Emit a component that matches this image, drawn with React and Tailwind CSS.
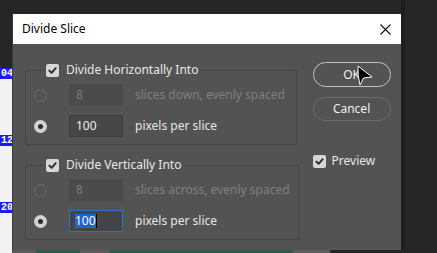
import React from "react";

const font = { fontFamily: '"Noto Sans", "Open Sans", sans-serif' };

const CheckBox = () => (
  <span className="flex h-[13px] w-[13px] shrink-0 items-center justify-center rounded-[2px] bg-[#d6d6d6]">
    <svg width="9" height="9" viewBox="0 0 9 9">
      <path d="M1.3 4.6 L3.6 6.8 L7.7 2.2" fill="none" stroke="#2a2a2a" strokeWidth="1.9" strokeLinecap="round" strokeLinejoin="round" />
    </svg>
  </span>
);

const Radio = ({ on }) =>
  on ? (
    <span className="flex h-[13px] w-[13px] shrink-0 items-center justify-center rounded-full bg-[#d2d2d2]">
      <span className="h-[5px] w-[5px] rounded-full bg-[#2c2c2c]" />
    </span>
  ) : (
    <span className="h-[13px] w-[13px] shrink-0 rounded-full border border-[#6a6a6a]" />
  );

const Row = ({ on, value, label, focused }) => (
  <div className="flex h-[22px] items-center whitespace-nowrap">
    <Radio on={on} />
    {focused ? (
      <div className="ml-[22px] flex h-[22px] w-[54px] shrink-0 items-center border border-[#2d6fc9] bg-[#454545] pl-[5px]">
        <span className="bg-[#1f63d4] text-[12px] leading-[14px] text-white">{value}</span>
        <span className="h-[14px] w-px bg-black" />
      </div>
    ) : on ? (
      <div className="ml-[22px] flex h-[22px] w-[54px] shrink-0 items-center border border-[#3c3c3c] bg-[#474747] pl-[6px] text-[12px] text-[#efefef]">
        {value}
      </div>
    ) : (
      <div className="ml-[22px] flex h-[22px] w-[54px] shrink-0 items-center border border-[#4c4c4c] bg-[#4b4b4b] pl-[6px] text-[12px] text-[#7c7c7c]">
        {value}
      </div>
    )}
    <span className={on ? "ml-[12px] text-[12px] text-[#e6e6e6]" : "ml-[12px] text-[12px] text-[#7f7f7f]"}>{label}</span>
  </div>
);

const Group = ({ title, rows, className }) => (
  <fieldset className={"w-[272px] rounded-[2px] border border-[#454545] px-[8px] pb-[7px] " + className}>
    <legend className="ml-[9px] flex items-center gap-[7px] px-[3px]">
      <CheckBox />
      <span className="whitespace-nowrap text-[12px] leading-[14px] text-[#e8e8e8]">{title}</span>
    </legend>
    <div className="mt-[7px] flex flex-col gap-[9px]">
      {rows.map((r, i) => (
        <Row key={i} {...r} />
      ))}
    </div>
  </fieldset>
);

const Label = ({ text }) => (
  <div className="flex h-[11px] w-[14px] items-center justify-end bg-[#1c1cf0] pr-[1px] font-mono text-[10px] font-bold leading-none text-white">
    {text}
  </div>
);

export default function App() {
  return (
    <div className="flex h-[253px] w-[437px] flex-col overflow-hidden bg-[#262626]" style={font}>
      <div className="flex h-[250px]">
        {/* canvas strip */}
        <div className="flex w-[12px] flex-col overflow-hidden">
          <div className="h-[68px] bg-[#262626]" />
          <div className="flex flex-1 flex-col bg-[#f2f2f4]">
            <Label text="04" />
            <div className="h-[56px]" />
            <Label text="12" />
            <div className="h-[56px]" />
            <Label text="20" />
          </div>
        </div>
        {/* dialog */}
        <div className="flex w-[389px] flex-col pt-[14px]">
          <div className="flex h-[30px] items-center justify-between border-l border-[#3a3a3a] bg-white pl-[9px] pr-[10px]">
            <span className="text-[12px] text-black">Divide Slice</span>
            <svg width="11" height="11" viewBox="0 0 11 11">
              <path d="M0.5 0.5 L10.5 10.5 M10.5 0.5 L0.5 10.5" stroke="#111" strokeWidth="1.1" />
            </svg>
          </div>
          <div className="relative flex flex-1 border-l border-[#3a3a3a] bg-[#535353] pl-[12px] pt-[18px]">
            <div className="flex flex-col">
              <Group
                title="Divide Horizontally Into"
                className="mt-[1px]"
                rows={[
                  { on: false, value: "8", label: "slices down, evenly spaced" },
                  { on: true, value: "100", label: "pixels per slice" },
                ]}
              />
              <Group
                title="Divide Vertically Into"
                className="mt-[13px]"
                rows={[
                  { on: false, value: "8", label: "slices across, evenly spaced" },
                  { on: true, value: "100", label: "pixels per slice", focused: true },
                ]}
              />
            </div>
            <div className="ml-[14px] flex flex-col">
              <button className="flex h-[25px] w-[78px] items-center justify-center rounded-full border-[1.5px] border-[#c4c4c4] text-[12px] text-[#f0f0f0]">
                OK
              </button>
              <button className="mt-[10px] flex h-[24px] w-[78px] items-center justify-center rounded-full border-[1.5px] border-[#6c6c6c] text-[12px] text-[#f0f0f0]">
                Cancel
              </button>
              <div className="mt-[31px] flex items-center gap-[6px]">
                <CheckBox />
                <span className="text-[12px] text-[#e8e8e8]">Preview</span>
              </div>
            </div>
            <svg className="absolute left-[343px] top-[21px]" width="18" height="22" viewBox="0 0 18 22">
              <path d="M2 1 L16 12 L7.5 13 L4 20 Q1.5 11 2 1 Z" fill="#000" stroke="#fff" strokeWidth="1" strokeLinejoin="round" />
            </svg>
          </div>
        </div>
        <div className="flex flex-1">
          <div className="w-[4px] bg-[#1e1e1e]" />
          <div className="flex-1 bg-[#262626]" />
        </div>
      </div>
      <div className="flex h-[3px]">
        <div className="w-[12px] bg-[#f2f2f4]" />
        <div className="w-[24px] bg-[#5a5a5a]" />
        <div className="w-[44px] bg-[#2c5a4e]" />
        <div className="w-[30px] bg-[#5a5a5a]" />
        <div className="w-[183px] bg-[#2c5a4e]" />
        <div className="w-[37px] bg-[#5e5e5e]" />
        <div className="flex-1 bg-[#262626]" />
      </div>
    </div>
  );
}
